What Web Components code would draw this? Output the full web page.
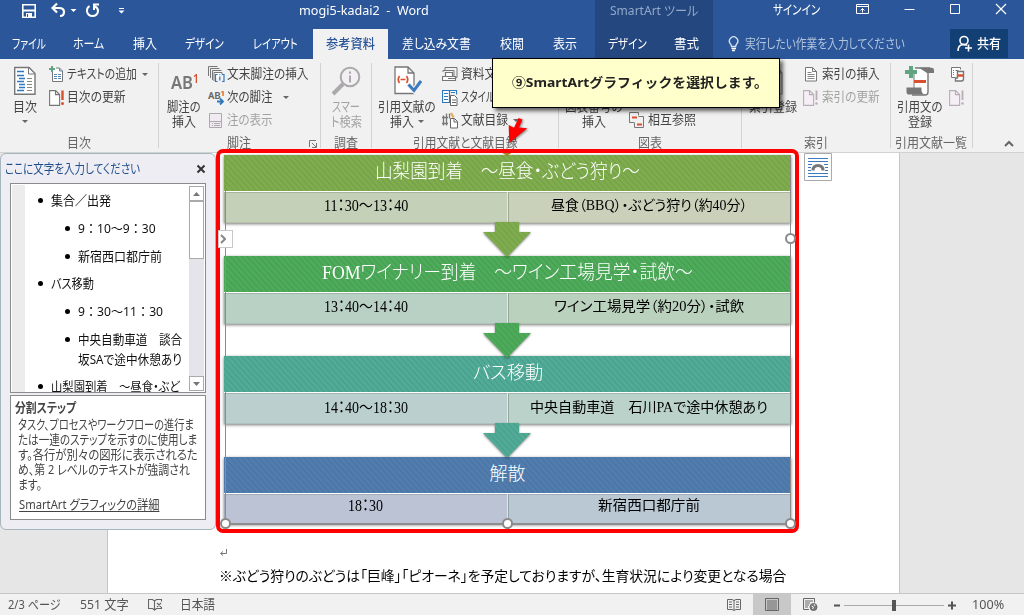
<!DOCTYPE html>
<html lang="ja">
<head>
<meta charset="utf-8">
<title>mogi5-kadai2 - Word</title>
<style>
html,body{margin:0;padding:0;width:1024px;height:615px;overflow:hidden}
body{font-family:"Noto Sans","Noto Sans CJK JP",sans-serif;background:#e6e6e6}
</style>
</head>
<body>
<word-window></word-window>
<script>
const define = (name, html, init) => customElements.define(name, class extends HTMLElement {
  connectedCallback() {
    if (this.shadowRoot) return;
    const root = this.attachShadow({mode: 'open'});
    root.innerHTML = typeof html === 'function' ? html(this) : html;
    if (init) init(this, root);
  }
});

/* Single line of text condensed or widened to the width in "w" */
define('fit-text', e => `<style>
:host{display:inline-block;flex:none;width:${e.getAttribute('w')}px;font-size:${e.getAttribute('s') || 13}px;line-height:1.15;white-space:nowrap;text-align:left}
span{display:inline-block;transform-origin:0 50%;text-decoration:inherit;text-underline-offset:inherit;font-feature-settings:${e.hasAttribute('full') ? 'normal' : '"palt"'};white-space:pre}
</style><span><slot></slot></span>`, (e, root) => {
  const s = root.querySelector('span');
  const n = s.offsetWidth;
  if (n) s.style.transform = `scaleX(${(+e.getAttribute('w') / n).toFixed(4)})`;
});

const svg = (w, h, body) => `<svg width="${w}" height="${h}" viewBox="0 0 ${w} ${h}" fill="none">${body}</svg>`;
const I = {
  toc: svg(22,30,`<path d="M.7 1.500h14.300l6 6v20.800H.7z" fill="#fff" stroke="#777" stroke-width="1.400"/><path d="M14.500 2v6h6" stroke="#777"/><path d="M3 5.500h7M3 9.500h7M5 12.500h6M3 15.500h7M5 18.500h6M5 21.500h6M3 24.500h7" stroke="#2f78bd" stroke-width="1.400"/><path d="M13 12.500h5M13 15.500h5M13 18.500h5M13 21.500h5M13 24.500h5" stroke="#888"/>`),
  addtext: svg(16,17,`<path d="M3.500 6v9.500h10V5l-3-3H7" fill="#fff" stroke="#777"/><path d="M10.500 2v3h3M5 8.500h3M5 10.500h3M5 12.500h3M9 8.500h3M9 10.500h3M9 12.500h3" stroke="#5a86b5"/><path d="M3 0v6M0 3h6" stroke="#5fa583" stroke-width="2"/>`),
  upd: svg(16,16,`<path d="M.6.600h6l4 4v10.800H.6zM6.500.6v4h4" fill="#fff" stroke="#777" stroke-width="1.100"/><path d="M13.500.500v9.500" stroke="#d9502e" stroke-width="2.400"/><circle cx="13.500" cy="13.500" r="1.500" fill="#d9502e"/>`),
  updg: svg(16,16,`<path d="M.6.600h6l4 4v10.800H.6zM6.500.6v4h4" fill="#f5eff5" stroke="#b9adb9" stroke-width="1.100"/><path d="M13.500.500v9.500" stroke="#b9adb9" stroke-width="1.800"/><circle cx="13.500" cy="13.500" r="1.200" fill="#b9adb9"/>`),
  endnote: svg(18,17,`<path d="M.5 10V.5h9M2.500 12V2.500h9M4.500 14V4.500h9" stroke="#777"/><path d="M6 15V6.500h8v2" fill="#fff" stroke="#777"/><path d="M9.500 8.500H7.500v7h2M14 8.500h2v7h-2M11.800 10.500v4M11.800 8.300v1" stroke="#2f78bd" stroke-width="1.200"/>`),
  shownote: svg(13,16,`<path d="M.5.500h12v14H.5z" fill="#f2eaf2" stroke="#aaa"/><path d="M1 8.500h11M3 10.500h1M5 10.500h6M3 12.500h1M5 12.500h6" stroke="#aaa"/>`),
  search: svg(30,30,`<circle cx="19" cy="11" r="9.300" fill="#f4eff4" stroke="#aaa" stroke-width="2"/><path d="M12 18 2 28" stroke="#aaa" stroke-width="4"/><path d="M19 9.500v7M19 5.500v2.200" stroke="#aaa" stroke-width="2"/>`),
  cite: svg(30,30,`<path d="M3 1h13l6 6v20.500H3zM16 1v6h6" fill="#fff" stroke="#777" stroke-width="1.300"/><path d="M7.500 10q-2.500 3.500 0 7M14.500 10q2.500 3.500 0 7M8.500 13.500h5" stroke="#d9502e" stroke-width="1.700"/><path d="m16.500 18 5.500 6.500 7-10" stroke="#f1f1f1" stroke-width="5"/><path d="m16.500 18.500 5.500 6 7-9.500" stroke="#3b7abf" stroke-width="3"/>`),
  source: svg(16,16,`<path d="M3 3.500V.5h12v10h-1M1 5V3.500h11V9" stroke="#777"/><path d="M3.500 9V5.500h7V9M.5 9.500h13v4H.5zM6 11.500h7" fill="#fff" stroke="#777" stroke-width="1.200"/>`),
  style: svg(16,16,`<path d="M.5.500h7v12h-7zM7.500.5h7v4" fill="#fff" stroke="#2f78bd" stroke-width="1.200"/><path d="M2 3.500h4M2 6.500h4M2 9.500h4M9 2.500h4" stroke="#2f78bd"/><path d="M8.500 5.500h4l2.500 2.500v7.500H8.500z" fill="#fff" stroke="#666"/><path d="M10 10h4M10 12.500h4" stroke="#666"/>`),
  bib: svg(16,17,`<path d="M1.500 3.500v10M4.500 1.500v12M7.500 1.500v5M0 5.500h6M0 11.500h6" stroke="#777" stroke-width="1.300"/><path d="m9 1 2.500 4.500" stroke="#e3b062" stroke-width="2.500"/><path d="M8.500 6.500h4l3 3v6.500h-7zM12 7v3h3" fill="#fff" stroke="#666"/>`),
  cap: svg(28,30,`<path d="M1 1h20l6 6v20H1z" fill="#fff" stroke="#777"/>`),
  cross: svg(16,17,`<path d="M5 .5H.5v10H5" stroke="#777"/><path d="M9.500 4.500h5v11h-9v-5" stroke="#777"/><path d="M3 5.500h5M8 12.500h5" stroke="#d9502e" stroke-width="2"/><path d="M5 .5h4.500v3M.5 10.500h3" stroke="#777"/>`),
  mark: svg(22,30,`<path d="M1 1h14l5 6v21H1zM15 1v6h5" fill="#f1f1f1" stroke="#888" stroke-width="1.200"/>`),
  index: svg(12,15,`<path d="M.5.500h7l4 4v9.500H.5zM7.500.5v4h4" fill="#fff" stroke="#777"/><path d="M2.500 5.500h4M2.500 7.500h7M2.500 9.500h7M2.500 11.500h7" stroke="#888"/>`),
  auth: svg(30,30,`<path d="M10 2h15q-2 1-2 5v19q0 3-3 3H7" fill="#fff" stroke="#777" stroke-width="1.400"/><path d="M22 7h7V4q0-2.300-2.500-2.300H14" fill="#777"/><path d="M9 7v15" stroke="#777"/><path d="M1.500 21.500h15v2.500q0 3 3 4.500H4q-2.500 0-2.500-2.800z" fill="#777"/><path d="M9 15.500h12" stroke="#d9502e" stroke-width="3"/><path d="M6 0v12M0 6h12" stroke="#5fa583" stroke-width="4"/>`),
  authlist: svg(16,16,`<path d="M5 10.500H1.500V.5h9v2M3 3.500h1M5.500 3.500h3M3 5.500h1M3 7.500h1" fill="#fff" stroke="#777"/><path d="M7.500 4.500h6v7q0 2.500-2 2.500h-6v-3h2z" fill="#fff" stroke="#777" stroke-width="1.400"/><path d="M8 8.500h5" stroke="#d9502e" stroke-width="2.500"/>`)
};
const AB = `<span class="ab"><fit-text w="22" s="18">AB</fit-text><sup><fit-text w="6" s="12">1</fit-text></sup></span>`;

/* Large ribbon button: icon above one or two lines of label */
define('big-button', `<style>:host{display:flex;flex-direction:column;align-items:center;flex:none;padding-top:7px;box-sizing:border-box;height:72px;color:#444}
.i{height:33px;display:flex;align-items:flex-start;justify-content:center}.l{display:flex;flex-direction:column;align-items:center}::slotted(div){height:15px;line-height:15px;display:flex;align-items:center;gap:4px}
</style><div class="i"><slot name="icon"></slot></div><div class="l"><slot></slot></div>`);

/* Small ribbon row: icon, label, optional drop-down mark */
define('small-button', e => `<style>:host{display:flex;align-items:center;height:23px;color:#444}:host([off]){color:#a3a3a3}
.i{width:${e.getAttribute('iw') || 18}px;display:flex;align-items:center;flex:none}svg,::slotted(svg){display:block}::slotted(fit-text){margin-bottom:2px}
b{border:3px solid transparent;border-top-color:#666;border-bottom:0;margin-left:${e.getAttribute('dg') || 5}px}
</style><div class="i">${I[e.getAttribute('icon')] || '<slot name="icon"></slot>'}</div><slot></slot>${e.hasAttribute('drop') ? '<b></b>' : ''}`);

define('ribbon-group', e => `<style>:host{display:grid;grid-template-rows:76px 16px;flex:none;box-sizing:border-box;width:${e.getAttribute('width')}px;position:relative;color:#666;
background:linear-gradient(#d2d2d2,#d2d2d2) right 4px/1px 85px no-repeat}
:host > div{min-width:0}.row{display:flex;align-items:flex-start}.cap{display:flex;justify-content:center;align-items:center;height:15px;padding-right:2px;padding-left:${e.getAttribute('shift') || 0}px}
svg{position:absolute;right:4px;bottom:4px}</style>
<div class="row"><slot></slot></div><div class="cap"><fit-text w="${e.getAttribute('cw')}">${e.getAttribute('label')}</fit-text></div>${e.hasAttribute('launch') ? svg(8,8,'<path d="M.5 7V.5H7M3 3l4 4M7.500 3v4.500H3" stroke="#777"/>') : ''}`);

define('title-bar', `<style>:host{display:flex;height:29px;background:#2b579a;color:#fff}
.t{display:flex;align-items:center;height:20px}.ctx{width:118px;height:29px;background:#23477e;color:#93a8cb;box-sizing:border-box;padding-left:15px}
svg{display:block}</style>
${svg(130,24,`<path d="M22.800 4.800h12.400v12.400H22.800z" stroke="#fff" stroke-width="1.600"/><path d="M23 10.500h12" stroke="#fff" stroke-width="2"/><path d="M26 13h6v4h-6z" fill="#fff"/><path d="M27.500 14v3" stroke="#2b579a"/><path d="M57 3.500 52.500 8l4.500 4.500M53 8h6q5 0 5 4t-4 4" stroke="#fff" stroke-width="2.200"/><path d="M70.500 9h6l-3 3zM118.500 10.500h6l-3 3zM119 8h5v1h-5z" fill="#fff"/><path d="M89.500 6q-3 2-2.500 5.500 1 4.500 5.500 4.500t5.500-4.500q.3-3.500-3-5M94 10V4.500h5" stroke="#fff" stroke-width="2"/>`)}
<div class="t" style="margin-left:169px;width:296px"><fit-text w="130">mogi5-kadai2  -  Word</fit-text></div>
<div class="ctx"><div class="t" style="height:21px"><fit-text w="88">SmartArt ツール</fit-text></div></div>
<div class="t" style="margin-left:60px;height:19px"><fit-text w="47">サインイン</fit-text></div>
<div style="margin-left:34px">${svg(170,24,`<path d="M2.500 4.500h12v9h-12zM2.500 6.500h12M8.500 12.500v-4M6.500 10.500l2-2 2 2M50.500 9.500h10M96.500 4.500h9v9h-9z" stroke="#fff"/><path d="m142 4 10 10m0-10-10 10" stroke="#fff" stroke-width="1.200"/>`)}</div>`);

define('tab-strip', `<style>:host{display:flex;height:30px;background:#2b579a;color:#fff}
div{display:flex;align-items:center;justify-content:center;flex:none;padding-bottom:1px;height:30px;box-sizing:border-box}.on{background:#f1f1f1;color:#2b579a}.ctx{background:#23477e}.share{background:#123f74;height:29px;width:58px;gap:4px;padding:0}
.ask{width:237px;justify-content:flex-start;padding-left:15px;gap:5px;color:#b3c4de}</style>
<div style="width:58px"><fit-text w="34">ファイル</fit-text></div><div style="width:61px"><fit-text w="31">ホーム</fit-text></div><div style="width:52px"><fit-text w="24">挿入</fit-text></div><div style="width:67px"><fit-text w="39">デザイン</fit-text></div><div style="width:75px"><fit-text w="45">レイアウト</fit-text></div><div class="on" style="width:75px"><fit-text w="49" style="font-weight:500">参考資料</fit-text></div><div style="width:97px"><fit-text w="69">差し込み文書</fit-text></div><div style="width:54px"><fit-text w="24">校閲</fit-text></div><div style="width:52px;margin-right:4px"><fit-text w="24">表示</fit-text></div><div class="ctx" style="width:64px"><fit-text w="39">デザイン</fit-text></div><div class="ctx" style="width:54px"><fit-text w="25">書式</fit-text></div>
<div class="ask">${svg(12,16,'<path d="M3.500 10.500q0-1.500-1.300-3A4.200 4.200 0 1 1 9 7.500q-1.300 1.500-1.300 3z" stroke="#dbe4f2" stroke-width="1.300"/><path d="M3.500 12.500h4.500M4 14.500h3" stroke="#fff" stroke-width="1.300"/>')}<fit-text w="160">実行したい作業を入力してください</fit-text></div>
<div class="share">${svg(16,17,'<circle cx="7" cy="5.500" r="4" stroke="#fff" stroke-width="1.600"/><path d="M1 16q0-6 5-6.500 3 0 4 1M8 13h7M11.500 9.500v7" stroke="#fff" stroke-width="1.600"/>')}<fit-text w="24" style="font-weight:500">共有</fit-text></div>`);

define('ribbon-bar', `<style>:host{display:flex;height:93px;background:#f1f1f1;border-bottom:1px solid #d2d2d2}
.s{padding-top:4px;flex:none}svg{display:block}i{border:3px solid transparent;border-top-color:#666;border-bottom:0}
.ab{display:flex;color:#777;font-weight:600;padding-left:3px}.ab sup{color:#d9502e;line-height:1;margin:0;display:block}.ab fit-text:first-child{margin-top:6px}
.tail{flex:1;display:flex;align-items:flex-end;justify-content:flex-end;padding:0 10px 5px 0}</style>
<ribbon-group width="159" label="目次" cw="24">
 <big-button style="width:49px"><span slot="icon">${I.toc}</span><div><fit-text w="24">目次</fit-text></div><div><i></i></div></big-button>
 <div class="s"><small-button icon="addtext" drop><fit-text w="70">テキストの追加</fit-text></small-button><small-button icon="upd"><fit-text w="59">目次の更新</fit-text></small-button></div></ribbon-group>
<ribbon-group width="162" label="脚注" cw="24" shift="-20" launch>
 <big-button style="width:49px"><span slot="icon">${AB}</span><div><fit-text w="34">脚注の</fit-text></div><div><fit-text w="24">挿入</fit-text></div></big-button>
 <div class="s"><small-button icon="endnote" iw="19"><fit-text w="82">文末脚注の挿入</fit-text></small-button><small-button iw="19" drop dg="10"><span slot="icon">${svg(17,17,'<text x="0" y="10" font-family="Roboto" font-weight="700" font-size="9.500" fill="#666">AB</text><text x="12.500" y="6.500" font-family="Roboto" font-size="8" font-weight="700" fill="#d9502e">1</text><path d="M9 12.500h6M12 9.500l3 3-3 3" stroke="#2f78bd" stroke-width="1.800"/>')}</span><fit-text w="46">次の脚注</fit-text></small-button><small-button off icon="shownote" iw="18" style="margin-left:1px"><fit-text w="46">注の表示</fit-text></small-button></div></ribbon-group>
<ribbon-group width="51" label="調査" cw="24">
 <big-button style="width:50px;color:#a3a3a3"><span slot="icon">${I.search}</span><div><fit-text w="28">スマー</fit-text></div><div><fit-text w="31">ト検索</fit-text></div></big-button></ribbon-group>
<ribbon-group width="187" label="引用文献と文献目録" cw="104">
 <big-button style="width:70px"><span slot="icon">${I.cite}</span><div><fit-text w="58">引用文献の</fit-text></div><div><fit-text w="24">挿入</fit-text><i></i></div></big-button>
 <div class="s"><small-button icon="source" iw="19"><fit-text w="82">資料文献の管理</fit-text></small-button><small-button icon="style" iw="19"><fit-text w="36">スタイル:</fit-text></small-button><small-button icon="bib" iw="19" drop><fit-text w="47">文献目録</fit-text></small-button></div></ribbon-group>
<ribbon-group width="183" label="図表" cw="24">
 <big-button style="width:70px"><span slot="icon">${I.cap}</span><div><fit-text w="58">図表番号の</fit-text></div><div><fit-text w="24">挿入</fit-text></div></big-button>
 <div class="s" style="padding-top:50px"><small-button icon="cross" iw="19"><fit-text w="48">相互参照</fit-text></small-button></div></ribbon-group>
<ribbon-group width="149" label="索引" cw="24">
 <big-button style="width:61px"><span slot="icon">${I.mark}</span><div><fit-text w="48">索引登録</fit-text></div></big-button>
 <div class="s"><small-button icon="index" iw="17" style="margin-left:2px"><fit-text w="58">索引の挿入</fit-text></small-button><small-button off icon="updg" iw="19"><fit-text w="58">索引の更新</fit-text></small-button></div></ribbon-group>
<ribbon-group width="82" label="引用文献一覧" cw="72">
 <big-button style="width:58px"><span slot="icon">${I.auth}</span><div><fit-text w="46">引用文の</fit-text></div><div><fit-text w="24">登録</fit-text></div></big-button>
 <div class="s"><small-button icon="authlist" style="margin-left:1px"></small-button><small-button icon="updg"></small-button></div></ribbon-group>
<div class="tail">${svg(10,7,'<path d="m1 6 4-4 4 4" stroke="#666" stroke-width="2"/>')}</div>`);

/* One step: hatched header above a time cell and a description cell */
define('flow-step', e => `<style>:host{display:block;width:567px;margin-bottom:${e.getAttribute('gap')}px;position:relative;box-shadow:0 1px 3px #0008}
.h{height:36px;display:flex;align-items:center;justify-content:center;padding-bottom:2px;box-sizing:border-box;color:#fff;font-weight:300;
background:repeating-linear-gradient(48deg,#0000 0 2.200px,rgba(0,0,0,.065) 2.800px 3.600px,#0000 4.200px),${e.getAttribute('color')}}
.r{display:grid;grid-template-columns:284px 1fr;height:${e.getAttribute('cell')}px;border-top:1px solid #ffffff90;box-sizing:border-box;color:#000}
.r>div{display:flex;align-items:center;justify-content:center;padding-bottom:${e.getAttribute('lift')}px;box-sizing:border-box;box-shadow:inset 0 1px #0002,inset 0 -1px #0001}
.r>div:first-child{background:${e.getAttribute('left')};border-left:2px solid #0002;border-right:1px solid #ffffff90;padding-right:2px}.r>div:last-child{background:${e.getAttribute('right')};border-left:1px solid #0003;padding-right:2px}
.a{position:absolute;left:258px;top:calc(100% - 1px);filter:drop-shadow(0 1px 1px #0007)}</style>
<div class="h"><slot name="head"></slot></div><div class="r"><div><slot name="time"></slot></div><div><slot name="what"></slot></div></div>
${+e.getAttribute('gap') ? svg(50,38,`<defs><pattern id="p" width="5" height="4.200" patternUnits="userSpaceOnUse" patternTransform="rotate(48)"><path d="M0 2h5" stroke="#000" stroke-opacity=".065" stroke-width="1.400"/></pattern></defs><path d="M13 0h24v10h12L25 35 1 10h12z" fill="${e.getAttribute('color')}"/><path d="M13 0h24v10h12L25 35 1 10h12z" fill="url(#p)"/>`).replace('<svg','<svg class="a"') : ''}`);

define('smart-art', `<style>:host{display:block;position:relative;width:567px;font-family:"Liberation Serif","Noto Sans CJK JP",serif}svg{display:block}
.sel{position:absolute;left:1px;top:0;width:566px;height:370px;border:1px solid #8c8c8c;border-top:0;border-bottom:2px solid #8e8e8e;box-sizing:border-box}
.hd{position:absolute;width:7px;height:7px;border:2px solid #8a8a8a;background:#fff;border-radius:50%}
.tip{position:absolute;left:276px;top:-4px;z-index:7}
.side{position:absolute;left:-6px;top:75px;padding-right:5px;box-sizing:border-box;width:15px;height:18px;background:#fff;border:1px solid #c8c8c8;display:flex;align-items:center;justify-content:center}
flow-step{z-index:1}flow-step:nth-of-type(1){z-index:5}flow-step:nth-of-type(2){z-index:4}flow-step:nth-of-type(3){z-index:3}.sel,.side,.hd{z-index:6}</style>
<flow-step color="#7fad4e" left="#c4d0b8" right="#c9d1ba" cell="32" gap="33" lift="3"><fit-text slot="head" w="265" s="19">山梨園到着　〜昼食・ぶどう狩り〜</fit-text><fit-text slot="time" w="84" s="16">11：30〜13：40</fit-text><fit-text slot="what" w="196" s="14">昼食（BBQ）・ぶどう狩り（約40分）</fit-text></flow-step>
<flow-step color="#4dab5a" left="#b9d1c5" right="#bad1bd" cell="32" gap="32" lift="3"><fit-text slot="head" w="371" s="19">FOMワイナリー到着　〜ワイン工場見学・試飲〜</fit-text><fit-text slot="time" w="84" s="16">13：40〜14：40</fit-text><fit-text slot="what" w="190" s="14">ワイン工場見学（約20分）・試飲</fit-text></flow-step>
<flow-step color="#50ab97" left="#bbcfcf" right="#bad2c9" cell="32" gap="33" lift="1"><fit-text slot="head" w="70" s="18">バス移動</fit-text><fit-text slot="time" w="84" s="16">14：40〜18：30</fit-text><fit-text slot="what" w="238" s="14">中央自動車道　石川PAで途中休憩あり</fit-text></flow-step>
<flow-step color="#507dae" left="#bbc3d4" right="#b9c8d2" cell="31" gap="0" lift="5"><fit-text slot="head" w="36" s="18">解散</fit-text><fit-text slot="time" w="35" s="16">18：30</fit-text><fit-text slot="what" w="102" s="14">新宿西口都庁前</fit-text></flow-step>
<div class="sel"></div><div class="side">${svg(6,10,'<path d="m1 1 4 4-4 4" stroke="#888" stroke-width="2"/>')}</div>
<div class="hd" style="left:-4px;top:363px"></div><div class="hd" style="left:278px;top:363px"></div><div class="hd" style="left:561px;top:363px"></div><div class="hd" style="left:561px;top:78px"></div>
<div class="tip">${svg(14,7,'<path d="M1 1h12L7 5z" fill="#ad842f"/>')}</div>`);

define('list-line', e => `<style>:host{display:flex;align-items:center;height:${e.getAttribute('h') || 28}px;padding-left:${e.getAttribute('in')}px;color:#111}
b{width:5px;height:5px;border-radius:50%;background:#000;margin-right:8px;flex:none}:host([cont]) b{visibility:hidden}</style><b></b><slot></slot>`);

define('text-pane', `<style>:host{display:block;box-sizing:border-box;width:216px;height:377px;background:#eeedf3;border:1px solid #a6b6bd;border-radius:6px;color:#444}
.t{display:flex;align-items:center;justify-content:space-between;height:29px;padding:0 9px 0 4px;color:#1e4e8c}
.list{margin-left:9px;width:196px;height:210px;box-sizing:border-box;border:1px solid #8b8b8b;background:#fff;display:flex;justify-content:space-between;overflow:hidden;padding:1px 1px 0 1px}
.in{width:176px;background:linear-gradient(90deg,#ececec 13px,#fff 13px);padding-top:2px;height:215px}
.sb{width:15px;background:#e5e4ea;display:flex;flex-direction:column;justify-content:space-between;height:205px;margin-top:1px}.sb div{box-sizing:border-box;border:1px solid #aaa;background:#fff;height:15px;display:flex;align-items:center;justify-content:center}.sb div.th{height:58px;margin:0 0 auto}
.d{margin:2px 0 0 9px;width:196px;height:125px;box-sizing:border-box;border:1px solid #8b8b8b;background:#fff;padding:3px 4px}
.d div{height:15px;display:flex;align-items:center;padding-left:3px}.d div:first-child{height:17px;margin-bottom:1px;padding-left:0;font-weight:700}.u{text-decoration:underline;text-underline-offset:2px}</style>
<div class="t"><fit-text w="135">ここに文字を入力してください</fit-text>${svg(10,10,'<path d="m1.500 1.500 7 7m0-7-7 7" stroke="#333" stroke-width="2"/>')}</div>
<div class="list"><div class="in">
<list-line in="26" h="27"><fit-text w="60">集合／出発</fit-text></list-line><list-line in="53"><fit-text w="78" full>9：10〜9：30</fit-text></list-line><list-line in="53"><fit-text w="84">新宿西口都庁前</fit-text></list-line><list-line in="26" h="27"><fit-text w="43">バス移動</fit-text></list-line><list-line in="53"><fit-text w="85" full>9：30〜11：30</fit-text></list-line><list-line in="53"><fit-text w="104">中央自動車道　談合</fit-text></list-line><list-line in="53" h="12" cont><fit-text w="104">坂SAで途中休憩あり</fit-text></list-line><list-line in="26" h="43"><fit-text w="129">山梨園到着　〜昼食・ぶど</fit-text></list-line></div>
<div class="sb"><div>${svg(7,4,'<path d="M0 4h7L3.500 0z" fill="#777"/>')}</div><div class="th"></div><div>${svg(7,4,'<path d="M0 0h7L3.500 4z" fill="#777"/>')}</div></div></div>
<div class="d"><div><fit-text w="61">分割ステップ</fit-text></div><div><fit-text w="176">タスク、プロセスやワークフローの進行ま</fit-text></div><div><fit-text w="179">たは一連のステップを示すのに使用しま</fit-text></div><div><fit-text w="180">す。各行が別々の図形に表示されるた</fit-text></div><div><fit-text w="172">め、第 2 レベルのテキストが強調され</fit-text></div><div><fit-text w="24">ます。</fit-text></div><div style="margin-top:5px;padding-left:4px"><fit-text class="u" w="140">SmartArt グラフィックの詳細</fit-text></div></div>`);

define('status-bar', `<style>:host{display:flex;align-items:center;background:#f1f1f1;border-top:1px solid #c6c6c6;color:#555;box-sizing:border-box;height:22px}svg{display:block}
.v{display:flex;align-items:center;justify-content:center;height:22px;width:38px}.on{background:#c8c8c8}</style>
<fit-text w="53" style="margin-left:8px">2/3 ページ</fit-text><fit-text w="49" style="margin-left:19px">551 文字</fit-text>
<span style="margin:0 17px 0 19px">${svg(15,13,'<path d="M.5 1.500h4l2 1.500v9l-2-1.500h-4zM6.500 3l2-1.500h5v2M6.500 12l2-1.500h5V9M9 5l4 4m0-4-4 4" stroke="#666" stroke-width="1.100"/>')}</span><fit-text w="35">日本語</fit-text>
<div class="v" style="margin-left:500px">${svg(14,13,'<path d="M.5 1.500h4.500l2 1 2-1h4.500v10H9l-2 1-2-1H.5zM7 2v10M2 4h3M2 6.500h3M2 9h3M9 4h3M9 6.500h3M9 9h3" stroke="#666"/>')}</div><div class="v on">${svg(14,13,'<path d="M.5.500h13v12H.5zM2 3h10M2 5h10M2 7h10M2 9h10M2 11h10" stroke="#666"/>')}</div><div class="v">${svg(15,13,'<path d="M6 11.500H.5V.5h11v4M2 3h8M2 5h5M2 7h4M2 9h3" stroke="#666"/><circle cx="10.500" cy="9" r="3.500" fill="#777" stroke="#666"/><path d="m8.500 8 2 1-1 2M11 6l1 2" stroke="#eee"/>')}</div>
<span style="margin-left:4px">${svg(125,12,'<path d="M1 6.500h6M115 6.500h8M119 2.500v8" stroke="#555" stroke-width="2"/><path d="M11 6.500h100" stroke="#aaa"/><path d="M59 1h4v11h-4z" fill="#555"/>')}</span><fit-text w="32" style="margin-left:14px">100%</fit-text>`);

define('call-out', `<style>:host{display:flex;align-items:center;justify-content:flex-start;box-sizing:border-box;width:288px;height:50px;padding:0 0 2px 19px;background:#ffffcc;border:1px solid #000;box-shadow:3px 3px 4px #0009;color:#222;font-weight:700}</style><slot></slot>`);

define('word-window', `<style>:host{display:flex;flex-direction:column;width:1024px;height:615px;position:relative;overflow:hidden;background:#e6e6e6}svg{display:block}
main{flex:1;position:relative;min-height:0;overflow:hidden}.page{margin-left:107px;width:793px;height:440px;background:#fff;border:solid #c6c6c6;border-width:0 1px;padding:2px 0 0 116px;box-sizing:border-box}
.ret{height:12px;margin:24px 0 0 -5px}.p{margin:5px 0 0 -5px;height:20px;display:flex;align-items:center;font-family:"Noto Sans CJK JP",sans-serif}text-pane{position:absolute;left:0;top:0}
.opt{position:absolute;left:804px;top:0}.frame{position:absolute;left:216px;top:149px;width:575px;height:376px;border:4px solid #f00;border-radius:7px}
call-out{position:absolute;left:492px;top:58px}.arrow{position:absolute;left:504px;top:116px;filter:drop-shadow(1px 1px 1px #0007)}</style>
<title-bar></title-bar><tab-strip></tab-strip><ribbon-bar></ribbon-bar>
<main><div class="page"><smart-art></smart-art><div class="ret">${svg(10,9,'<path d="M7.500 1v4.500H2M4 3.500l-2.500 2L4 7.500" stroke="#777"/>')}</div><div class="p"><fit-text w="567" s="14">※ぶどう狩りのぶどうは「巨峰」「ピオーネ」を予定しておりますが、生育状況により変更となる場合</fit-text></div></div>
<text-pane></text-pane><div class="opt">${svg(28,28,'<path d="M.5.500h27v27H.5z" fill="#fff" stroke="#aaa"/><path d="M4 5.500h20M4 8.500h20M4 11.500h4M20 11.500h4M4 14.500h3M21 14.500h3M4 17.500h3M21 17.500h3M4 20.500h20M4 23.500h20" stroke="#3b7abf"/><path d="M9 17.500q0-5 5-5t5 5" stroke="#777" stroke-width="3"/>')}</div></main>
<status-bar></status-bar>
<div class="frame"></div>
<div class="arrow">${svg(26,30,'<path d="m14.500 2 4 1.500-3.500 8 8.300.8L5.300 27 4.700 9l5.300 2.700z" fill="#f00"/>')}</div>
<call-out><fit-text w="256" full>⑨SmartArtグラフィックを選択します。</fit-text></call-out>`);
</script>
</body>
</html>
